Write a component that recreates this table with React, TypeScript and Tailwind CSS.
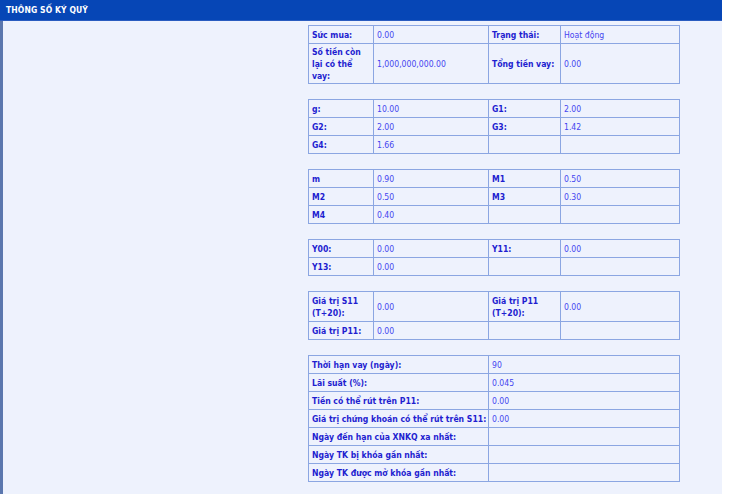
import React from "react";

const L = "font-bold text-[#1e1ed0] align-middle px-[3px] py-0 border border-[#8ba6e2]";
const V = "text-[#4545f0] align-middle px-[3px] py-0 border border-[#8ba6e2]";

type Row = [string, string, string, string, number?];

function Grid4({ rows }: { rows: Row[] }) {
  return (
    <table className="border-collapse w-[371px] table-fixed mb-[15px]">
      <colgroup>
        <col className="w-[65px]" />
        <col className="w-[115px]" />
        <col className="w-[72px]" />
        <col className="w-[119px]" />
      </colgroup>
      <tbody>
        {rows.map((r, i) => (
          <tr key={i} style={{ height: r[4] ?? 18 }}>
            <td className={L}>{r[0]}</td>
            <td className={V}>{r[1]}</td>
            <td className={L}>{r[2]}</td>
            <td className={V}>{r[3]}</td>
          </tr>
        ))}
      </tbody>
    </table>
  );
}

export default function App() {
  const last: [string, string][] = [
    ["Thời hạn vay (ngày):", "90"],
    ["Lãi suất (%):", "0.045"],
    ["Tiền có thể rút trên P11:", "0.00"],
    ["Giá trị chứng khoán có thể rút trên S11:", "0.00"],
    ["Ngày đến hạn của XNKQ xa nhất:", ""],
    ["Ngày TK bị khóa gần nhất:", ""],
    ["Ngày TK được mở khóa gần nhất:", ""],
  ];
  return (
    <div
      className="w-[750px] h-[494px] bg-white overflow-hidden text-[8.6px] leading-[12px]"
      style={{ fontFamily: '"DejaVu Sans Condensed", "DejaVu Sans", sans-serif' }}
    >
      <div className="w-[722px] h-full flex flex-col">
        <div className="h-[21px] bg-[#0646b6] flex items-center pl-[6px] border-b border-[#2a5cc0]">
          <span className="text-white font-bold text-[8.5px] tracking-[0.1px]">THÔNG SỐ KÝ QUỸ</span>
        </div>
        <div className="flex-1 bg-[#eef2fd] border-l-[3px] border-[#5b77ae] pl-[305px] pt-[4px]">
          <Grid4
            rows={[
              ["Sức mua:", "0.00", "Trạng thái:", "Hoạt động"],
              ["Số tiền còn lại có thể vay:", "1,000,000,000.00", "Tổng tiền vay:", "0.00", 40],
            ]}
          />
          <Grid4
            rows={[
              ["g:", "10.00", "G1:", "2.00"],
              ["G2:", "2.00", "G3:", "1.42"],
              ["G4:", "1.66", "", ""],
            ]}
          />
          <Grid4
            rows={[
              ["m", "0.90", "M1", "0.50"],
              ["M2", "0.50", "M3", "0.30"],
              ["M4", "0.40", "", ""],
            ]}
          />
          <Grid4
            rows={[
              ["Y00:", "0.00", "Y11:", "0.00"],
              ["Y13:", "0.00", "", ""],
            ]}
          />
          <Grid4
            rows={[
              ["Giá trị S11 (T+20):", "0.00", "Giá trị P11 (T+20):", "0.00", 30],
              ["Giá trị P11:", "0.00", "", ""],
            ]}
          />
          <table className="border-collapse w-[371px] table-fixed">
            <colgroup>
              <col className="w-[180px]" />
              <col className="w-[191px]" />
            </colgroup>
            <tbody>
              {last.map((r, i) => (
                <tr key={i} className="h-[18px]">
                  <td className={L + " whitespace-nowrap"}>{r[0]}</td>
                  <td className={V}>{r[1]}</td>
                </tr>
              ))}
            </tbody>
          </table>
        </div>
      </div>
    </div>
  );
}
